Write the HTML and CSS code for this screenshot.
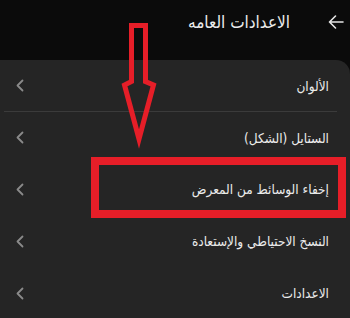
FILE: index.html
```html
<!DOCTYPE html>
<html lang="ar" dir="rtl">
<head>
<meta charset="utf-8">
<link rel="stylesheet" href="styles.css">
</head>
<body>
<div class="screen">
  <header class="topbar">
    <svg class="back" width="16" height="14" viewBox="0 0 16 14"><path d="M1.5 7H15M7.5 1 1.5 7l6 6" fill="none" stroke="#e6e6e6" stroke-width="1.6" stroke-linecap="round" stroke-linejoin="round"/></svg>
    <h1 class="title">الاعدادات العامه</h1>
  </header>
  <main class="card">
    <div class="row"><span class="label">الألوان</span><svg class="chev" width="8" height="13" viewBox="0 0 8 13"><path d="M6.5 1.5 1.5 6.5l5 5" fill="none" stroke="#8a8a8a" stroke-width="1.8" stroke-linecap="round" stroke-linejoin="round"/></svg></div>
    <div class="sep"></div>
    <div class="row"><span class="label">الستايل (الشكل)</span><svg class="chev" width="8" height="13" viewBox="0 0 8 13"><path d="M6.5 1.5 1.5 6.5l5 5" fill="none" stroke="#8a8a8a" stroke-width="1.8" stroke-linecap="round" stroke-linejoin="round"/></svg></div>
    <div class="row"><span class="label">إخفاء الوسائط من المعرض</span><svg class="chev" width="8" height="13" viewBox="0 0 8 13"><path d="M6.5 1.5 1.5 6.5l5 5" fill="none" stroke="#8a8a8a" stroke-width="1.8" stroke-linecap="round" stroke-linejoin="round"/></svg></div>
    <div class="row"><span class="label">النسخ الاحتياطي والإستعادة</span><svg class="chev" width="8" height="13" viewBox="0 0 8 13"><path d="M6.5 1.5 1.5 6.5l5 5" fill="none" stroke="#8a8a8a" stroke-width="1.8" stroke-linecap="round" stroke-linejoin="round"/></svg></div>
    <div class="row"><span class="label">الاعدادات</span><svg class="chev" width="8" height="13" viewBox="0 0 8 13"><path d="M6.5 1.5 1.5 6.5l5 5" fill="none" stroke="#8a8a8a" stroke-width="1.8" stroke-linecap="round" stroke-linejoin="round"/></svg></div>
  </main>
  <svg class="annot" width="350" height="318" viewBox="0 0 350 318">
    <path d="M131.5 25.5H145.5V81.5L153.5 85 139 139 124.5 85 131.5 81.5Z" fill="none" stroke="#e61e28" stroke-width="5" stroke-linejoin="miter"/>
    <rect x="95" y="161" width="247" height="53" fill="none" stroke="#e61e28" stroke-width="8"/>
  </svg>
</div>
</body>
</html>
```

FILE: styles.css
```css
html, body {
  margin: 0;
  padding: 0;
  background: #0b0b0b;
}
.screen {
  position: relative;
  width: 350px;
  height: 318px;
  overflow: hidden;
  font-family: "DejaVu Sans Condensed", "DejaVu Sans", sans-serif;
  font-stretch: condensed;
  color: #e9e9e9;
}
.topbar {
  height: 60px;
  display: flex;
  align-items: center;
  padding: 0 6px 16px 0;
  box-sizing: border-box;
  gap: 38px;
}
.back {
  display: block;
}
.title {
  margin: 0;
  font-size: 17px;
  font-weight: normal;
  color: #ececec;
}
.card {
  background: #252525;
  border-top-right-radius: 14px;
  height: 258px;
}
.row {
  height: 51px;
  display: flex;
  align-items: center;
  justify-content: space-between;
  padding: 0 21px 0 16px;
}
.row + .row {
  height: 52px;
}
.label {
  font-size: 13.5px;
  color: #ebebeb;
}
.chev {
  display: block;
}
.sep {
  height: 1px;
  background: #3b3b3b;
  margin-inline-start: 13px;
  margin-inline-end: 4px;
}
.annot {
  position: absolute;
  left: 0;
  top: 0;
  pointer-events: none;
}
```
